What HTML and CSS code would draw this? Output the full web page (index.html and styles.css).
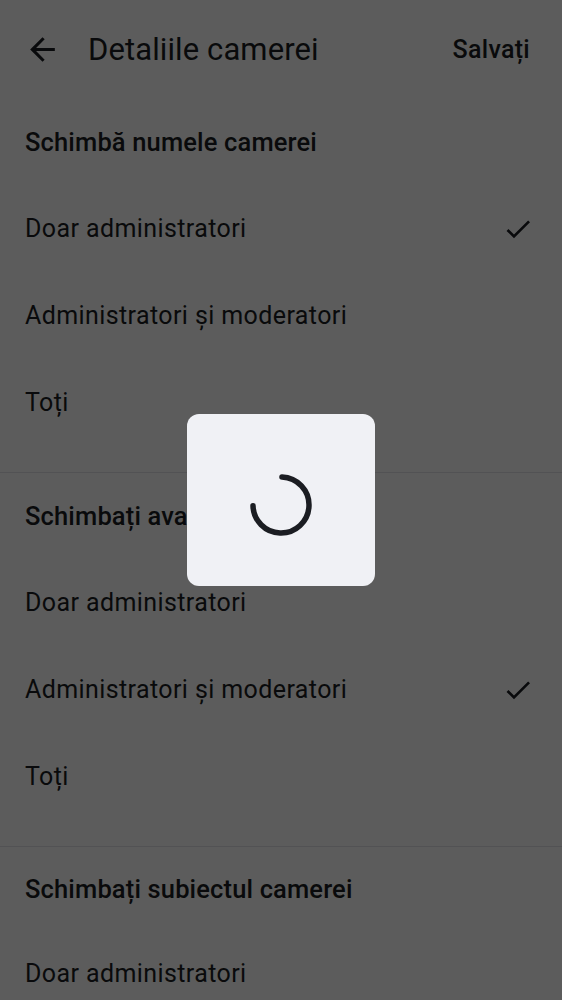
FILE: index.html
```html
<!DOCTYPE html>
<html lang="ro">
<head>
<meta charset="utf-8">
<link rel="stylesheet" href="styles.css">
</head>
<body>
<div class="screen">
  <header class="appbar">
    <button class="back" aria-label="Înapoi">
      <svg viewBox="0 0 24 24" width="37" height="37"><path d="M20 11H7.83l5.59-5.59L12 4l-8 8 8 8 1.41-1.41L7.83 13H20v-2z" fill="currentColor"/></svg>
    </button>
    <h1 class="title">Detaliile camerei</h1>
    <span class="save">Salvați</span>
  </header>

  <section class="group">
    <h2 class="group-title">Schimbă numele camerei</h2>
    <div class="row"><span>Doar administratori</span><svg class="check" viewBox="0 0 24 24" width="32" height="32"><path d="M9 16.17 4.83 12l-1.42 1.41L9 19 21 7l-1.41-1.41z" fill="currentColor"/></svg></div>
    <div class="row"><span>Administratori și moderatori</span></div>
    <div class="row"><span>Toți</span></div>
  </section>

  <section class="group">
    <h2 class="group-title">Schimbați avatarul camerei</h2>
    <div class="row"><span>Doar administratori</span></div>
    <div class="row"><span>Administratori și moderatori</span><svg class="check" viewBox="0 0 24 24" width="32" height="32"><path d="M9 16.17 4.83 12l-1.42 1.41L9 19 21 7l-1.41-1.41z" fill="currentColor"/></svg></div>
    <div class="row"><span>Toți</span></div>
  </section>

  <section class="group last">
    <h2 class="group-title">Schimbați subiectul camerei</h2>
    <div class="row short"><span>Doar administratori</span></div>
  </section>
</div>

<div class="scrim">
  <div class="dialog">
    <svg class="spinner" viewBox="0 0 62 62" width="62" height="62">
      <circle cx="31" cy="31" r="28" fill="none" stroke="currentColor" stroke-width="5.5" stroke-linecap="round" stroke-dasharray="130 200" transform="rotate(-88 31 31)"/>
    </svg>
  </div>
</div>
</body>
</html>
```

FILE: styles.css
```css
html, body {
  margin: 0;
  padding: 0;
}
body {
  background: #ffffff;
  font-family: Roboto, "Noto Sans", sans-serif;
  color: #1b1d22;
  width: 562px;
  height: 1000px;
  overflow: hidden;
}
.screen {
  display: flex;
  flex-direction: column;
}
.appbar {
  height: 99px;
  display: flex;
  align-items: center;
  padding: 0 32px 0 24px;
  box-sizing: border-box;
}
.back {
  border: none;
  background: none;
  padding: 0;
  margin: 0;
  color: #1b1d22;
  width: 37px;
  height: 37px;
  display: flex;
}
.title {
  margin: 0 0 0 27px;
  font-size: 31px;
  font-weight: 400;
  flex: 1;
  letter-spacing: 0.1px;
}
.save {
  font-size: 25px;
  font-weight: 500;
  letter-spacing: 0.3px;
}
.group {
  display: flex;
  flex-direction: column;
  padding-bottom: 26px;
  border-bottom: 1px solid #e2e3e8;
}
.group.last {
  padding-bottom: 0;
  border-bottom: none;
}
.group-title {
  margin: 0;
  height: 86px;
  display: flex;
  align-items: center;
  padding: 0 25px;
  font-size: 25.5px;
  font-weight: 500;
  letter-spacing: 0.15px;
}
.last .group-title {
  height: 84px;
}
.row {
  height: 87px;
  display: flex;
  align-items: center;
  justify-content: space-between;
  padding: 0 28px 0 25px;
  font-size: 25px;
  font-weight: 400;
  letter-spacing: 0.4px;
}
.row.short {
  height: 84px;
}
.check {
  color: #1b1d22;
}
.scrim {
  position: fixed;
  inset: 0;
  background: rgba(0, 0, 0, 0.64);
  display: flex;
  align-items: center;
  justify-content: center;
}
.dialog {
  width: 188px;
  height: 172px;
  box-sizing: border-box;
  padding-top: 10px;
  background: #f0f1f5;
  border-radius: 12px;
  display: flex;
  align-items: center;
  justify-content: center;
  color: #1b1d22;
}
```
